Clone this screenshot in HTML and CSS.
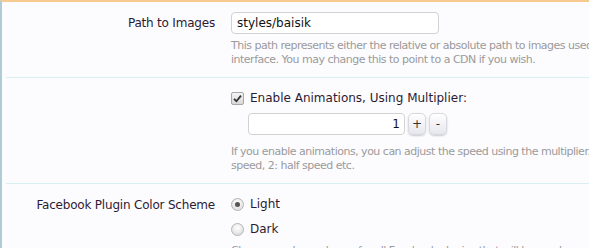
FILE: index.html
```html
<!DOCTYPE html>
<html lang="en">
<head>
    <title>Options</title>
    <link rel="stylesheet" href="styles.css">
</head>
<body>
    <div class="options-panel">
        <div class="option-row">
            <label class="option-label">Path to Images</label>
            <div class="option-control">
                <input type="text" class="text-input" value="styles/baisik">
                <p class="hint">This path represents either the relative or absolute path to images used by the XenForo interface. You may change this to point to a CDN if you wish.</p>
            </div>
        </div>

        <div class="option-row">
            <div class="option-label"></div>
            <div class="option-control">
                <div class="check-line">
                    <span class="fake-check">
                        <svg width="9" height="9" viewBox="0 0 9 9"><path d="M1 4.8 L3.4 7.2 L8 1.6" fill="none" stroke="#333" stroke-width="1.8"/></svg>
                    </span>
                    <span>Enable Animations, Using Multiplier:</span>
                </div>
                <div class="spin-box">
                    <input type="text" class="spin-input" value="1">
                    <button class="spin-btn">+</button>
                    <button class="spin-btn">-</button>
                </div>
                <p class="hint">If you enable animations, you can adjust the speed using the multiplier. 0: instant, 1: normal speed, 2: half speed etc.</p>
            </div>
        </div>

        <div class="option-row">
            <label class="option-label">Facebook Plugin Color Scheme</label>
            <div class="option-control">
                <div class="check-line">
                    <span class="fake-radio checked"></span>
                    <span>Light</span>
                </div>
                <div class="check-line">
                    <span class="fake-radio"></span>
                    <span>Dark</span>
                </div>
                <p class="hint">Choose a colour scheme for all Facebook plugins that will be used.</p>
            </div>
        </div>
    </div>
</body>
</html>
```

FILE: styles.css
```css
body {
    margin: 0;
    font-family: 'DejaVu Sans', Tahoma, sans-serif;
    background-color: #fcfcff;
    overflow: hidden;
}

.options-panel {
    border-top: 2px solid #f7cb90;
    border-left: 2px solid #aecbd6;
    min-height: 300px;
}

.option-row {
    display: grid;
    grid-template-columns: 209px 1fr;
    column-gap: 16px;
    padding: 10px 0 10px 0;
    margin-left: 4px;
    border-bottom: 1px solid #d9eef0;
}

.option-label {
    text-align: right;
    font-size: 12px;
    letter-spacing: -0.2px;
    color: #2e1a32;
    padding-top: 4px;
}

.option-control {
    font-size: 12px;
    color: #2e1a32;
    white-space: nowrap;
    min-width: 0;
}

.text-input {
    width: 208px;
    height: 22px;
    box-sizing: border-box;
    border: 1px solid #d2d2d2;
    border-radius: 4px;
    padding: 0 5px;
    font-family: inherit;
    font-size: 12px;
    color: #111;
    background: #fff;
    display: block;
}

.hint {
    margin: 5px 0 0 0;
    font-size: 11px;
    letter-spacing: -0.5px;
    line-height: 14px;
    color: #9a9a9a;
    white-space: normal;
    width: 485px;
}

.check-line {
    display: flex;
    align-items: center;
    gap: 6px;
    height: 20px;
}

.check-line + .check-line {
    margin-top: 5px;
}

.fake-check {
    width: 11px;
    height: 11px;
    border: 1px solid #a8a8a8;
    border-radius: 2px;
    background: linear-gradient(#f4f4f4, #d8d8d8);
    display: flex;
    align-items: center;
    justify-content: center;
}

.fake-radio {
    width: 11px;
    height: 11px;
    border: 1px solid #b4b4b4;
    border-radius: 50%;
    background: radial-gradient(circle at 50% 35%, #ffffff, #d6d6d6);
    position: relative;
}

.fake-radio.checked::after {
    content: '';
    position: absolute;
    left: 3px;
    top: 3px;
    width: 5px;
    height: 5px;
    border-radius: 50%;
    background: #555;
}

.spin-box {
    display: flex;
    gap: 3px;
    margin: 5px 0 10px 17px;
}

.spin-input {
    width: 157px;
    height: 22px;
    box-sizing: border-box;
    border: 1px solid #d2d2d2;
    border-radius: 4px;
    padding: 0 4px;
    text-align: right;
    font-family: inherit;
    font-size: 12px;
    color: #111;
    background: #fff;
}

.spin-btn {
    width: 18px;
    height: 22px;
    padding: 0;
    border: 1px solid #d8d8e0;
    border-radius: 5px;
    background: linear-gradient(#ffffff, #e6e6ee);
    box-shadow: 0 1px 2px rgba(0,0,0,0.2);
    font-family: inherit;
    font-size: 12px;
    color: #333;
}
```
